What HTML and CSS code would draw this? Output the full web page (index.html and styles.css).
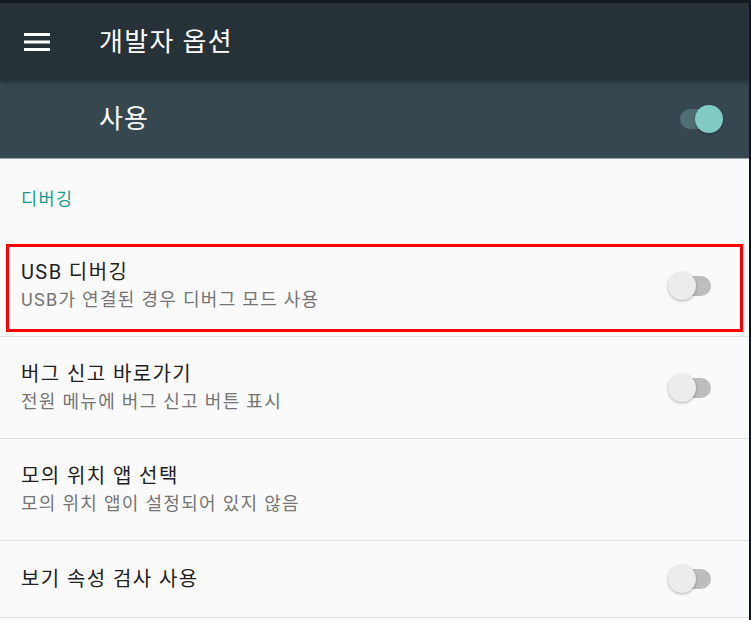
FILE: index.html
```html
<!DOCTYPE html>
<html lang="ko">
<head>
  <meta charset="UTF-8">
  <title>개발자 옵션</title>
  <link rel="stylesheet" href="styles.css">
</head>
<body>
<div class="app">
  <div class="status-edge"></div>

  <!-- 툴바 -->
  <header class="toolbar">
    <svg class="menu-icon" width="26" height="18" viewBox="0 0 26 18">
      <rect x="0" y="0" width="26" height="3" fill="#fff"/>
      <rect x="0" y="7.5" width="26" height="3" fill="#fff"/>
      <rect x="0" y="15" width="26" height="3" fill="#fff"/>
    </svg>
    <div class="toolbar-title">개발자 옵션</div>
  </header>

  <!-- 사용 스위치 -->
  <div class="master-bar">
    <div class="master-title">사용</div>
    <div class="switch on"><span class="track"></span><span class="thumb"></span></div>
  </div>

  <div class="list">
    <div class="category">디버깅</div>

    <div class="item">
      <div class="item-text">
        <div class="item-title">USB 디버깅</div>
        <div class="item-summary">USB가 연결된 경우 디버그 모드 사용</div>
      </div>
      <div class="switch"><span class="track"></span><span class="thumb"></span></div>
      <div class="highlight"></div>
    </div>

    <div class="item">
      <div class="item-text">
        <div class="item-title">버그 신고 바로가기</div>
        <div class="item-summary">전원 메뉴에 버그 신고 버튼 표시</div>
      </div>
      <div class="switch"><span class="track"></span><span class="thumb"></span></div>
    </div>

    <div class="item">
      <div class="item-text">
        <div class="item-title">모의 위치 앱 선택</div>
        <div class="item-summary">모의 위치 앱이 설정되어 있지 않음</div>
      </div>
    </div>

    <div class="item single">
      <div class="item-text">
        <div class="item-title">보기 속성 검사 사용</div>
      </div>
      <div class="switch"><span class="track"></span><span class="thumb"></span></div>
    </div>
  </div>
</div>
</body>
</html>
```

FILE: styles.css
```css
html, body {
  margin: 0;
  padding: 0;
  height: 100%;
}
body {
  background: #0f1229;
  font-family: Roboto, "Noto Sans CJK KR", sans-serif;
  overflow: hidden;
}
.app {
  width: 749px;
  height: 620px;
  background: #fafafa;
  overflow: hidden;
}
.status-edge {
  height: 3px;
  background: #171d21;
}
.toolbar {
  position: relative;
  z-index: 2;
  height: 77px;
  background: #263238;
  display: flex;
  align-items: center;
  padding-left: 24px;
  box-shadow: 0 2px 4px rgba(0, 0, 0, 0.35);
}
.menu-icon {
  display: block;
}
.toolbar-title {
  margin-left: 49px;
  color: #fff;
  font-size: 26px;
  line-height: 30px;
  letter-spacing: 1.3px;
}
.master-bar {
  height: 78px;
  background: #37474f;
  border-bottom: 1px solid #9aa4a8;
  display: flex;
  align-items: center;
  justify-content: space-between;
  padding: 0 26px 0 99px;
}
.master-title {
  color: #fff;
  font-size: 26px;
  line-height: 30px;
  letter-spacing: 1.2px;
}
.switch {
  position: relative;
  width: 55px;
  height: 28px;
  flex: none;
}
.switch .track {
  position: absolute;
  left: 12px;
  top: 4px;
  width: 31px;
  height: 20px;
  border-radius: 10px;
  background: #bdbdbd;
}
.switch .thumb {
  position: absolute;
  left: 0;
  top: 0;
  width: 28px;
  height: 28px;
  border-radius: 50%;
  background: #ececec;
  box-shadow: 0 1px 3px rgba(0, 0, 0, 0.3);
}
.switch.on .track {
  background: rgba(128, 203, 196, 0.3);
}
.switch.on .thumb {
  left: 27px;
  background: #80cbc4;
}
.category {
  height: 76px;
  padding: 0 21px;
  box-sizing: border-box;
  display: flex;
  align-items: center;
  color: #1b9c8e;
  font-size: 17.5px;
  letter-spacing: 1.4px;
}
.item {
  position: relative;
  height: 102px;
  box-sizing: border-box;
  border-bottom: 1px solid #e0e0e0;
  display: flex;
  align-items: center;
  justify-content: space-between;
  padding: 0 26px 0 21px;
}
.item.single {
  height: 77px;
}
.item-title {
  color: #212121;
  font-size: 20px;
  line-height: 28px;
  letter-spacing: 1.4px;
}
.item-summary {
  color: #757575;
  font-size: 18px;
  line-height: 28px;
  letter-spacing: 1.3px;
}
.highlight {
  position: absolute;
  top: 9px;
  left: 6px;
  right: 6px;
  bottom: 4px;
  border: 3.5px solid #ff0000;
}
```
